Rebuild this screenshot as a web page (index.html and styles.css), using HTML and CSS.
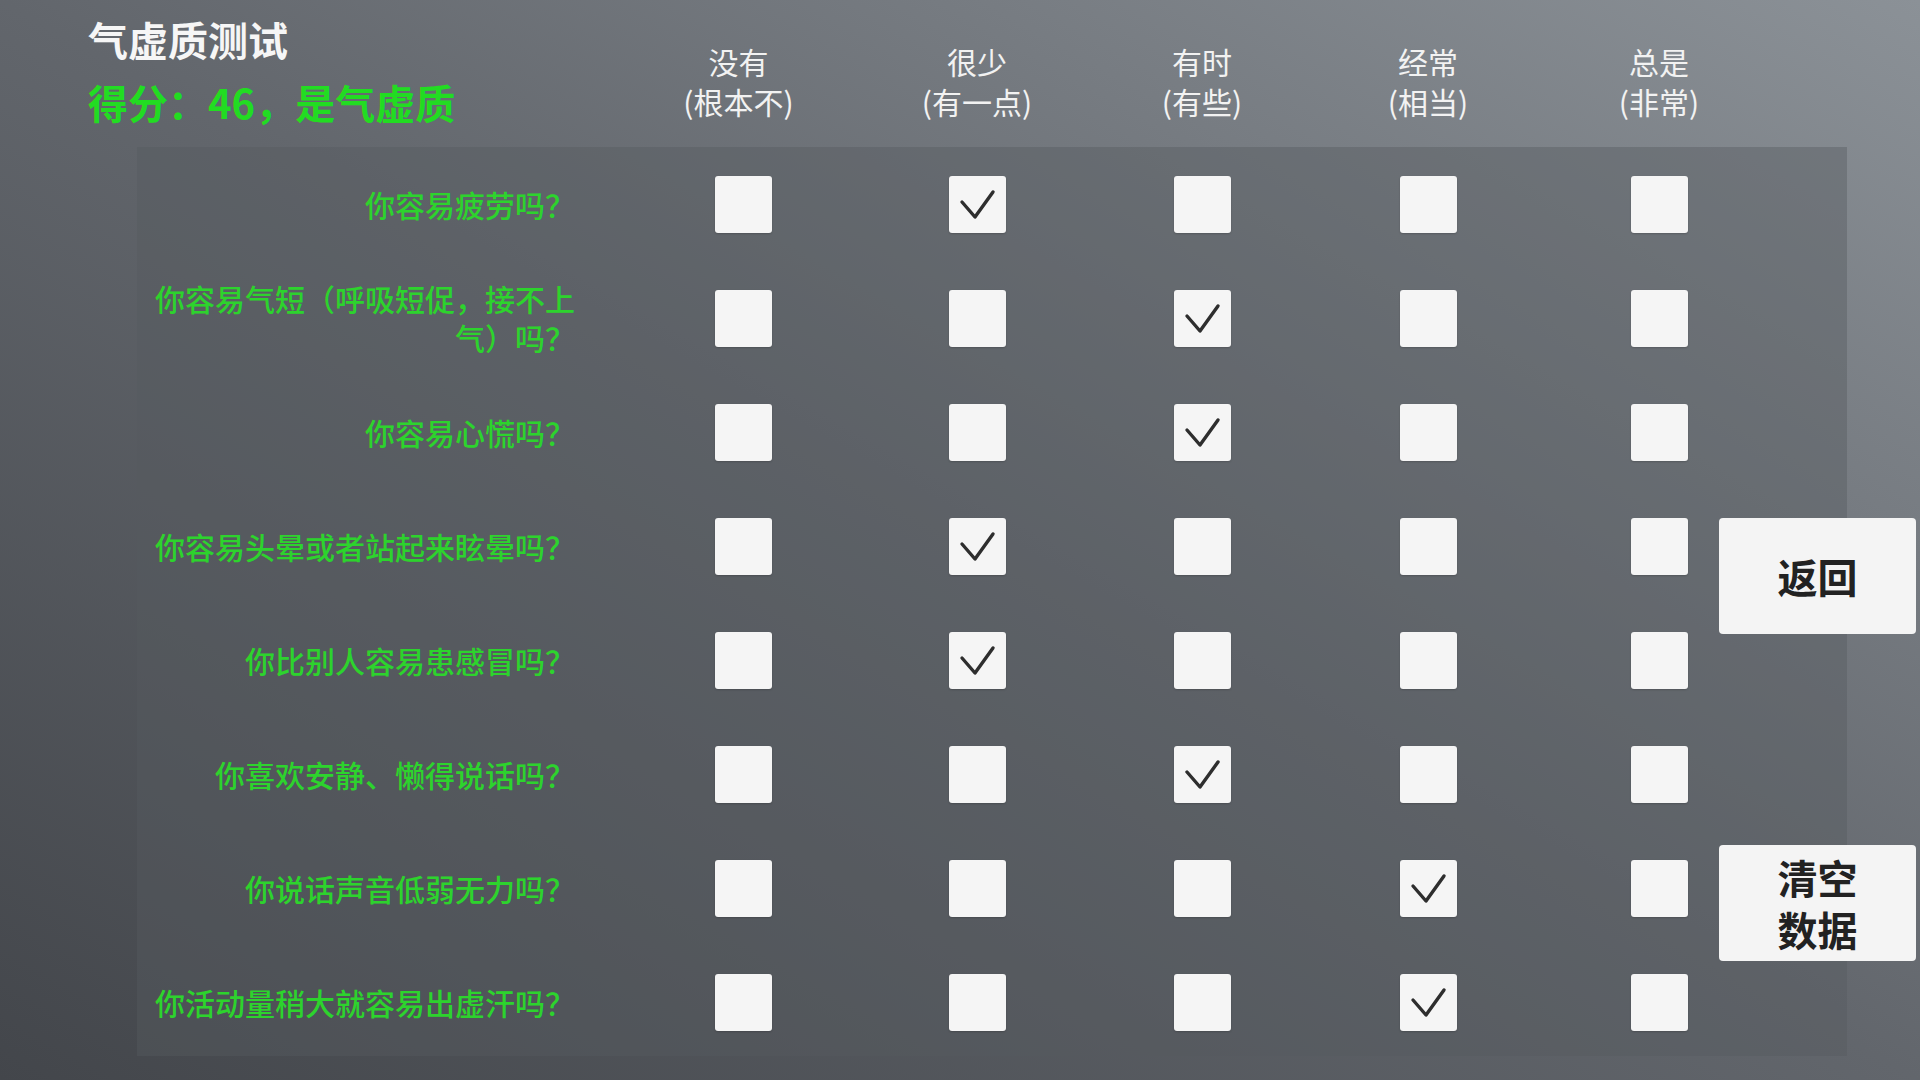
FILE: index.html
```html
<!DOCTYPE html>
<html lang="zh-CN">
<head>
<meta charset="utf-8">
<title>气虚质测试</title>
<link rel="stylesheet" href="styles.css">
</head>
<body>
<div class="top">
  <div class="title-block">
    <div class="title">气虚质测试</div>
    <div class="score">得分：46，是气虚质</div>
  </div>
  <div class="heads">
    <div class="head">没有<br>(根本不)</div>
    <div class="head">很少<br>(有一点)</div>
    <div class="head">有时<br>(有些)</div>
    <div class="head">经常<br>(相当)</div>
    <div class="head">总是<br>(非常)</div>
  </div>
</div>

<div class="panel">
  <div class="q">你容易疲劳吗？</div>
  <div class="cell"><div class="box"></div></div>
  <div class="cell"><div class="box"><svg viewBox="0 0 57 57"><polyline points="13,26 26,41 44,16"/></svg></div></div>
  <div class="cell"><div class="box"></div></div>
  <div class="cell"><div class="box"></div></div>
  <div class="cell"><div class="box"></div></div>

  <div class="q">你容易气短（呼吸短促，接不上气）吗？</div>
  <div class="cell"><div class="box"></div></div>
  <div class="cell"><div class="box"></div></div>
  <div class="cell"><div class="box"><svg viewBox="0 0 57 57"><polyline points="13,26 26,41 44,16"/></svg></div></div>
  <div class="cell"><div class="box"></div></div>
  <div class="cell"><div class="box"></div></div>

  <div class="q">你容易心慌吗？</div>
  <div class="cell"><div class="box"></div></div>
  <div class="cell"><div class="box"></div></div>
  <div class="cell"><div class="box"><svg viewBox="0 0 57 57"><polyline points="13,26 26,41 44,16"/></svg></div></div>
  <div class="cell"><div class="box"></div></div>
  <div class="cell"><div class="box"></div></div>

  <div class="q">你容易头晕或者站起来眩晕吗？</div>
  <div class="cell"><div class="box"></div></div>
  <div class="cell"><div class="box"><svg viewBox="0 0 57 57"><polyline points="13,26 26,41 44,16"/></svg></div></div>
  <div class="cell"><div class="box"></div></div>
  <div class="cell"><div class="box"></div></div>
  <div class="cell"><div class="box"></div></div>

  <div class="q">你比别人容易患感冒吗？</div>
  <div class="cell"><div class="box"></div></div>
  <div class="cell"><div class="box"><svg viewBox="0 0 57 57"><polyline points="13,26 26,41 44,16"/></svg></div></div>
  <div class="cell"><div class="box"></div></div>
  <div class="cell"><div class="box"></div></div>
  <div class="cell"><div class="box"></div></div>

  <div class="q">你喜欢安静、懒得说话吗？</div>
  <div class="cell"><div class="box"></div></div>
  <div class="cell"><div class="box"></div></div>
  <div class="cell"><div class="box"><svg viewBox="0 0 57 57"><polyline points="13,26 26,41 44,16"/></svg></div></div>
  <div class="cell"><div class="box"></div></div>
  <div class="cell"><div class="box"></div></div>

  <div class="q">你说话声音低弱无力吗？</div>
  <div class="cell"><div class="box"></div></div>
  <div class="cell"><div class="box"></div></div>
  <div class="cell"><div class="box"></div></div>
  <div class="cell"><div class="box"><svg viewBox="0 0 57 57"><polyline points="13,26 26,41 44,16"/></svg></div></div>
  <div class="cell"><div class="box"></div></div>

  <div class="q">你活动量稍大就容易出虚汗吗？</div>
  <div class="cell"><div class="box"></div></div>
  <div class="cell"><div class="box"></div></div>
  <div class="cell"><div class="box"></div></div>
  <div class="cell"><div class="box"><svg viewBox="0 0 57 57"><polyline points="13,26 26,41 44,16"/></svg></div></div>
  <div class="cell"><div class="box"></div></div>
</div>

<div class="actions">
  <div class="btn">返回</div>
  <div class="btn">清空数据</div>
</div>
</body>
</html>
```

FILE: styles.css
```css
html, body {
  margin: 0;
  padding: 0;
}

body {
  width: 1920px;
  height: 1080px;
  overflow: hidden;
  position: relative;
  font-family: "Noto Sans CJK SC", "Noto Sans", sans-serif;
  background: linear-gradient(to top right, #43464b 0%, #62666c 50%, #8b9197 100%);
}

.top {
  display: flex;
  height: 147px;
}

.title-block {
  width: 541px;
  flex: none;
  padding: 8px 0 0 88px;
  font-size: 40px;
  font-weight: 700;
  line-height: 63px;
  white-space: nowrap;
}

.title {
  color: #f6f6f6;
}

.score {
  color: #22dc22;
}

.heads {
  display: grid;
  grid-template-columns: 229px 238px 212px 240px 222px;
  padding-top: 41px;
}

.head {
  text-align: center;
  color: #f2f2f2;
  font-size: 30px;
  line-height: 40px;
}

.head:first-child {
  padding-right: 10px;
}

.panel {
  margin-left: 137px;
  width: 1710px;
  height: 909px;
  display: grid;
  grid-template-columns: 492px 229px 238px 212px 240px 222px;
  grid-template-rows: repeat(8, 114px);
  background: rgba(86, 90, 96, 0.42);
}

.q {
  display: flex;
  align-items: center;
  justify-content: flex-end;
  text-align: right;
  padding: 0 54px 0 8px;
  color: #2dd32d;
  font-size: 30px;
  font-weight: 500;
  line-height: 39px;
}

.cell {
  display: flex;
  align-items: center;
  justify-content: center;
}

.box {
  width: 57px;
  height: 57px;
  background: #f5f5f5;
  border-radius: 3px;
  box-shadow: 0 1px 2px rgba(0, 0, 0, 0.18);
}

.box svg {
  display: block;
  width: 57px;
  height: 57px;
}

.box polyline {
  fill: none;
  stroke: #2e2e2e;
  stroke-width: 3.4;
  stroke-linecap: round;
  stroke-linejoin: round;
}

.actions {
  position: absolute;
  left: 1719px;
  top: 518px;
  display: flex;
  flex-direction: column;
  gap: 211px;
}

.btn {
  width: 197px;
  height: 116px;
  box-sizing: border-box;
  padding: 0 40px;
  display: flex;
  align-items: center;
  justify-content: center;
  text-align: center;
  background: #f4f4f4;
  border-radius: 4px;
  color: #222;
  font-size: 40px;
  font-weight: 700;
  line-height: 52px;
}
```
